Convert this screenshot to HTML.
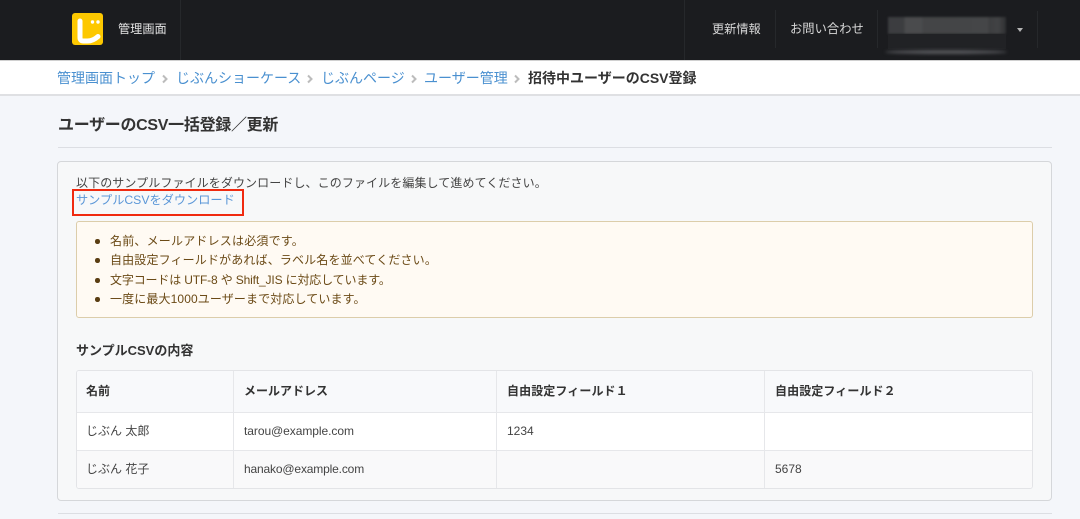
<!DOCTYPE html>
<html lang="ja"><head><meta charset="utf-8">
<style>
html{background:#f4f6fa}
html,body{margin:0;padding:0;width:1080px;height:519px;overflow:hidden}
body{position:relative;background:#f4f6fa;font-family:"Liberation Sans","Noto Sans CJK JP",sans-serif;color:#333;filter:blur(.35px)}
div,a,span{position:absolute;white-space:nowrap;box-sizing:border-box}
.t{line-height:20px;height:20px}
.v{background:#26282b;width:1px}
.bc{font-size:14px;color:#4a90d0;top:68px}
.sep{position:absolute;top:74px}
.li{font-size:12px;color:#6b4a16;left:110px}
.dot{width:4.5px;height:4.5px;border-radius:50%;background:#5a3d12;left:95px}
.c{font-size:12px;color:#444}
.h{font-size:12px;font-weight:bold;color:#333}
</style></head><body>
<div style="left:0;top:0;width:1080px;height:60px;background:#1b1c1f"></div>
<div style="left:0;top:60px;width:1080px;height:36px;background:#fff;border-top:1px solid #d0d0d0;border-bottom:2px solid #dfe0e3"></div>

<svg style="position:absolute;left:72px;top:13px" width="32" height="32" viewBox="0 0 32 32">
<rect width="31" height="32" rx="3" fill="#fdc800"/>
<path d="M8 8V24.5Q8 28 11.5 28H15.5Q21 28 26 23.5" fill="none" stroke="#fff" stroke-width="5" stroke-linecap="round" stroke-linejoin="round"/>
<circle cx="20.5" cy="9" r="1.7" fill="#fff"/><circle cx="26" cy="9" r="1.7" fill="#fff"/>
</svg>
<div class="t" style="left:118px;top:19px;font-size:12.2px;color:#e4e4e4">管理画面</div>
<div class="v" style="left:180px;top:0;height:60px"></div>

<div class="v" style="left:684px;top:0;height:60px"></div>
<div class="t" style="left:712px;top:19px;font-size:12.2px;color:#d8d8d8">更新情報</div>
<div class="v" style="left:775px;top:10px;height:38px"></div>
<div class="t" style="left:790px;top:19px;font-size:12.3px;color:#d8d8d8">お問い合わせ</div>
<div class="v" style="left:877px;top:10px;height:38px"></div>
<div style="left:888px;top:17px;width:118px;height:17px;background:linear-gradient(90deg,#3c3d40 0,#3c3d40 16px,#4a4b4d 17px,#4a4b4d 34px,#444547 35px,#454648 100px,#3d3e40 101px,#424345 110px,#2f3032 118px);filter:blur(1px)"></div>
<div style="left:888px;top:34px;width:118px;height:15px;background:#212225"></div>
<div style="left:885px;top:50px;width:122px;height:4px;border-radius:50%;background:#55565a;filter:blur(1.5px)"></div>
<div style="left:1017px;top:28px;width:0;height:0;border-left:3.5px solid transparent;border-right:3.5px solid transparent;border-top:4px solid #b5b5b5"></div>
<div class="v" style="left:1037px;top:11px;height:37px"></div>

<a class="t bc" style="left:57px">管理画面トップ</a>
<svg class="sep" style="left:162px" width="6" height="10" viewBox="0 0 6 10"><path d="M1 1.5L4.5 5L1 8.5" fill="none" stroke="#bcbcbc" stroke-width="2"/></svg>
<a class="t bc" style="left:176px">じぶんショーケース</a>
<svg class="sep" style="left:307px" width="6" height="10" viewBox="0 0 6 10"><path d="M1 1.5L4.5 5L1 8.5" fill="none" stroke="#bcbcbc" stroke-width="2"/></svg>
<a class="t bc" style="left:321px">じぶんページ</a>
<svg class="sep" style="left:411px" width="6" height="10" viewBox="0 0 6 10"><path d="M1 1.5L4.5 5L1 8.5" fill="none" stroke="#bcbcbc" stroke-width="2"/></svg>
<a class="t bc" style="left:424px">ユーザー管理</a>
<svg class="sep" style="left:514px" width="6" height="10" viewBox="0 0 6 10"><path d="M1 1.5L4.5 5L1 8.5" fill="none" stroke="#bcbcbc" stroke-width="2"/></svg>
<div class="t" style="left:528px;top:68px;font-size:14px;font-weight:bold;color:#333">招待中ユーザーのCSV登録</div>

<div class="t" style="left:58px;top:116px;font-size:16px;font-weight:bold;color:#333;letter-spacing:-.3px">ユーザーのCSV一括登録／更新</div>
<div style="left:58px;top:147px;width:994px;height:1px;background:#dcdee3"></div>

<div style="left:57px;top:161px;width:995px;height:340px;background:#f7f8f9;border:1px solid #d5d7da;border-radius:4px"></div>
<div class="t" style="left:76px;top:173px;font-size:12px;color:#444;letter-spacing:.1px">以下のサンプルファイルをダウンロードし、このファイルを編集して進めてください。</div>
<a class="t" style="left:76px;top:190px;font-size:12.2px;color:#5b97d8">サンプルCSVをダウンロード</a>
<div style="left:72px;top:189px;width:172px;height:27px;border:2px solid #f02a10"></div>

<div style="left:76px;top:221px;width:957px;height:97px;background:#fffaf3;border:1px solid #dccdaa;border-radius:3px"></div>
<div class="dot" style="top:239px"></div><div class="t li" style="top:231px;letter-spacing:.2px">名前、メールアドレスは必須です。</div>
<div class="dot" style="top:258px"></div><div class="t li" style="top:250px;letter-spacing:.15px">自由設定フィールドがあれば、ラベル名を並べてください。</div>
<div class="dot" style="top:278px"></div><div class="t li" style="top:270px;letter-spacing:-.15px">文字コードは UTF-8 や Shift_JIS に対応しています。</div>
<div class="dot" style="top:297px"></div><div class="t li" style="top:289px;letter-spacing:.12px">一度に最大1000ユーザーまで対応しています。</div>

<div class="t" style="left:76px;top:341px;font-size:13px;font-weight:bold;color:#333">サンプルCSVの内容</div>

<div style="left:76px;top:370px;width:957px;height:119px;border:1px solid #e3e4e7;border-radius:3px;background:#fff;overflow:hidden">
  <div style="left:0;top:0;width:955px;height:42px;background:#f8f9fb;border-bottom:1px solid #e6e7ea"></div>
  <div style="left:0;top:79px;width:955px;height:38px;background:#f9f9fa;border-top:1px solid #e6e7ea"></div>
  <div style="left:156px;top:0;width:1px;height:117px;background:#e6e7ea"></div>
  <div style="left:419px;top:0;width:1px;height:117px;background:#e6e7ea"></div>
  <div style="left:687px;top:0;width:1px;height:117px;background:#e6e7ea"></div>
</div>
<div class="t h" style="left:86px;top:381px">名前</div>
<div class="t h" style="left:244px;top:381px">メールアドレス</div>
<div class="t h" style="left:507px;top:381px;letter-spacing:.1px">自由設定フィールド１</div>
<div class="t h" style="left:775px;top:381px;letter-spacing:.1px">自由設定フィールド２</div>
<div class="t c" style="left:86px;top:421px">じぶん 太郎</div>
<div class="t c" style="left:244px;top:421px;letter-spacing:-.06px">tarou@example.com</div>
<div class="t c" style="left:507px;top:421px">1234</div>
<div class="t c" style="left:86px;top:459px">じぶん 花子</div>
<div class="t c" style="left:244px;top:459px;letter-spacing:-.16px">hanako@example.com</div>
<div class="t c" style="left:775px;top:459px">5678</div>

<div style="left:58px;top:513px;width:994px;height:1px;background:#dcdee3"></div>
</body></html>
